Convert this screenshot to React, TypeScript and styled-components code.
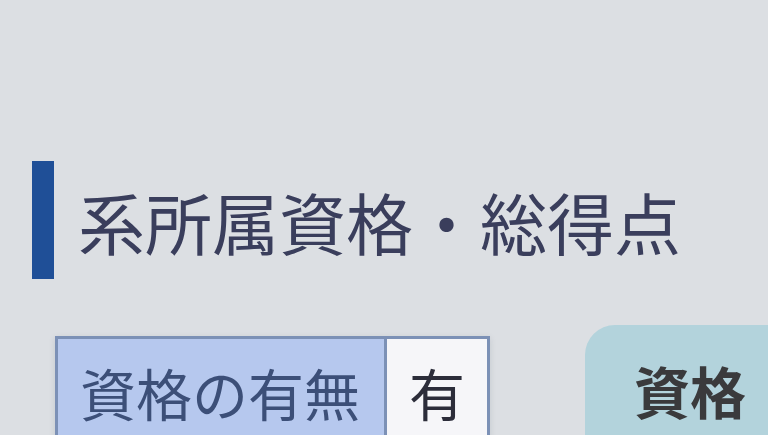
import styled, { createGlobalStyle } from "styled-components";

const GlobalStyle = createGlobalStyle`
  * { margin: 0; padding: 0; box-sizing: border-box; }
  html, body {
    width: 100%;
    height: 100%;
    overflow: hidden;
    background: #dcdfe3;
    font-family: "Noto Sans CJK JP", "Noto Sans", sans-serif;
  }
`;

const Page = styled.div`
  width: 768px;
  height: 435px;
  padding: 161px 0 0 32px;
  overflow: hidden;
`;

const Heading = styled.h2`
  display: flex;
  align-items: center;
  height: 118px;
  border-left: 22px solid #1f4f97;
  padding-left: 24px;
  font-size: 67px;
  font-weight: 400;
  line-height: 1;
  color: #3a3e5c;
  white-space: nowrap;
`;

const Row = styled.div`
  display: flex;
  align-items: flex-start;
  gap: 95px;
  margin-top: 46px;
`;

const Table = styled.div`
  display: flex;
  margin: 11px 0 0 23px;
  border: 3px solid #7c91b6;
  box-shadow: 0 2px 6px rgba(60, 70, 90, 0.15);
`;

const Cell = styled.div<{ $head?: boolean }>`
  padding: 22px ${(p) => (p.$head ? "24px 0 22px" : "22px")};
  background: ${(p) => (p.$head ? "#b6c8ee" : "#f6f6f9")};
  color: ${(p) => (p.$head ? "#3c4f78" : "#2c2d3a")};
  border-right: ${(p) => (p.$head ? "3px solid #7c91b6" : "none")};
  font-size: 56px;
  line-height: 1.1;
  white-space: nowrap;
`;

const Card = styled.div`
  flex-shrink: 0;
  width: 260px;
  height: 200px;
  border-radius: 30px;
  background: #b3d3dc;
  padding: 24px 0 0 49px;
  color: #3a3a3c;
  font-size: 56px;
  font-weight: 700;
  line-height: 1.45;
`;

export default function App() {
  return (
    <>
      <GlobalStyle />
      <Page>
        <Heading>系所属資格・総得点</Heading>
        <Row>
          <Table>
            <Cell $head>資格の有無</Cell>
            <Cell>有</Cell>
          </Table>
          <Card>
            資格
            <br />
            加点
          </Card>
        </Row>
      </Page>
    </>
  );
}
